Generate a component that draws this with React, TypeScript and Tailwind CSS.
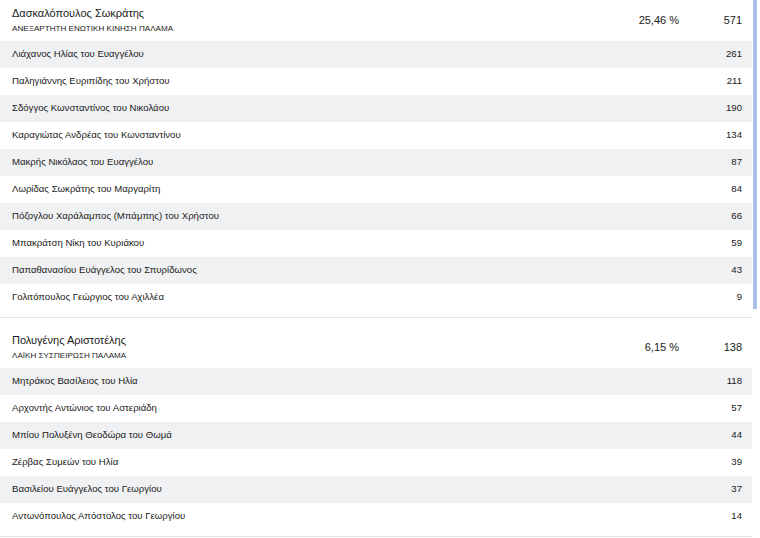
const sections = [
  {
    name: "Δασκαλόπουλος Σωκράτης",
    party: "ΑΝΕΞΑΡΤΗΤΗ ΕΝΩΤΙΚΗ ΚΙΝΗΣΗ ΠΑΛΑΜΑ",
    percent: "25,46 %",
    votes: 571,
    candidates: [
      ["Λιάχανος Ηλίας του Ευαγγέλου", 261],
      ["Παληγιάννης Ευριπίδης του Χρήστου", 211],
      ["Σδόγγος Κωνσταντίνος του Νικολάου", 190],
      ["Καραγιώτας Ανδρέας του Κωνσταντίνου", 134],
      ["Μακρής Νικόλαος του Ευαγγέλου", 87],
      ["Λωρίδας Σωκράτης του Μαργαρίτη", 84],
      ["Πόζογλου Χαράλαμπος (Μπάμπης) του Χρήστου", 66],
      ["Μπακράτση Νίκη του Κυριάκου", 59],
      ["Παπαθανασίου Ευάγγελος του Σπυρίδωνος", 43],
      ["Γολιτόπουλος Γεώργιος του Αχιλλέα", 9],
    ] as [string, number][],
  },
  {
    name: "Πολυγένης Αριστοτέλης",
    party: "ΛΑΪΚΗ ΣΥΣΠΕΙΡΩΣΗ ΠΑΛΑΜΑ",
    percent: "6,15 %",
    votes: 138,
    candidates: [
      ["Μητράκος Βασίλειος του Ηλία", 118],
      ["Αρχοντής Αντώνιος του Αστεριάδη", 57],
      ["Μπίου Πολυξένη Θεοδώρα του Θωμά", 44],
      ["Ζέρβας Συμεών του Ηλία", 39],
      ["Βασιλείου Ευάγγελος του Γεωργίου", 37],
      ["Αντωνόπουλος Απόστολος του Γεωργίου", 14],
    ] as [string, number][],
  },
];

const Section = ({ s }: { s: (typeof sections)[number] }) => (
  <div className="border-b border-[#e1e2e6] pb-[6px]">
    <div className="flex items-center pl-3 pr-[10px] pt-[14px] pb-[6px]">
      <div className="flex-1">
        <div className="text-[11px] leading-[16px] text-[#1a1a1a]">{s.name}</div>
        <div className="pt-px text-[8.1px] leading-[13px] text-[#222]">{s.party}</div>
      </div>
      <div className="w-[80px] text-right text-[11px] text-[#1a1a1a]">{s.percent}</div>
      <div className="w-[63px] text-right text-[11px] text-[#1a1a1a]">{s.votes}</div>
    </div>
    {s.candidates.map(([n, v], i) => (
      <div
        key={n}
        className={
          (i % 2 === 0 ? "bg-[#f0f1f3] " : "") +
          "flex h-[27px] items-center justify-between pl-3 pr-[10px] text-[9.6px] text-[#1a1a1a]"
        }
      >
        <span>{n}</span>
        <span>{v}</span>
      </div>
    ))}
  </div>
);

export default function App() {
  return (
    <div
      className="relative h-[538px] w-[760px] overflow-hidden bg-white"
      style={{ fontFamily: '"Liberation Sans", Arial, sans-serif' }}
    >
      <div className="-mt-[9px] w-[752px]">
        {sections.map((s) => (
          <Section key={s.name} s={s} />
        ))}
      </div>
      <div className="absolute right-[3px] top-0 h-[309px] w-[4px] bg-[#a9c1e6]" />
    </div>
  );
}
